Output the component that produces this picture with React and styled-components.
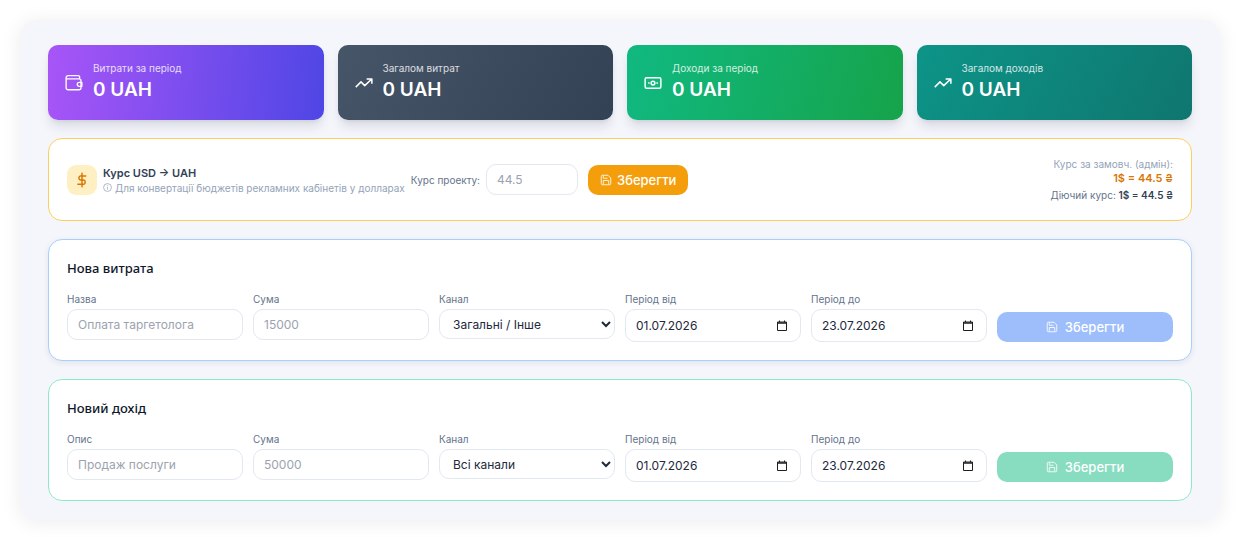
import React, { useState } from 'react'
import styled, { createGlobalStyle } from 'styled-components'

const GlobalStyle = createGlobalStyle`
  * { box-sizing: border-box; }
  body {
    margin: 0;
    background: #fff;
    color: #1e293b;
    font-family: Inter, "Liberation Sans", sans-serif;
  }
  button, input, select { font-family: inherit; }
`

const Page = styled.main`
  margin: 20px;
  padding: 25px 28px 19px;
  display: flex;
  flex-direction: column;
  gap: 18px;
  border-radius: 16px;
  background: #f5f6fc;
  box-shadow: 0 2px 20px rgba(0, 0, 0, 0.08);
`

const Stats = styled.section`
  display: grid;
  grid-template-columns: repeat(4, 1fr);
  gap: 14px;
`

const StatCard = styled.div`
  display: flex;
  align-items: center;
  gap: 10px;
  padding: 16px 17px;
  border-radius: 10px;
  color: #fff;
  background: linear-gradient(${props => props.$angle || '120deg'}, ${props => props.$from}, ${props => props.$to});
  box-shadow: 0 8px 12px -2px rgba(15, 23, 42, 0.12), 0 3px 5px -3px rgba(15, 23, 42, 0.12);
`

const StatLabel = styled.div`
  font-size: 10px;
  line-height: 15px;
  opacity: 0.8;
`

const StatValue = styled.div`
  font-size: 19px;
  line-height: 28px;
  font-weight: 600;
`

const Icon = styled.svg.attrs(props => ({
  viewBox: '0 0 24 24',
  width: props.$size,
  height: props.$size,
  fill: 'none',
  stroke: 'currentColor',
  'aria-hidden': true
}))`
  flex: none;
  display: block;
  stroke-width: ${props => props.$stroke || 2};
  stroke-linejoin: round;
`

const Card = styled.section`
  padding: 18px;
  border: 1px solid ${props => props.$border};
  border-radius: 14px;
  background: #fff;
  box-shadow: ${props => props.$shadow || 'none'};
`

const RateCard = styled(Card)`
  display: flex;
  align-items: center;
  gap: 6px;
`

const RateInfo = styled.div`
  display: flex;
  align-items: center;
  gap: 6px;
`

const RateBadge = styled.div`
  display: grid;
  place-items: center;
  width: 30px;
  height: 30px;
  border-radius: 9px;
  color: #d97706;
  background: #fef0c3;
`

const RateTitle = styled.h2`
  margin: 0;
  font-size: 11px;
  line-height: 16px;
  font-weight: 600;
  color: #334155;
`

const RateHint = styled.p`
  display: flex;
  align-items: center;
  gap: 3px;
  margin: 0;
  font-size: 10px;
  line-height: 14px;
  color: #94a3b8;
`

const RateForm = styled.form`
  display: flex;
  align-items: center;
  gap: 10px;
`

const RateField = styled.div`
  display: flex;
  align-items: center;
  gap: 6px;
`

const RateSummary = styled.div`
  margin-left: auto;
  text-align: right;
  font-size: 10px;
  line-height: 14px;
  color: #94a3b8;
`

const RateDefault = styled.div`
  font-size: 11px;
  line-height: 14px;
  font-weight: 600;
  color: #d97706;
`

const RateActive = styled.div`
  padding-top: 3px;
  color: #64748b;
  strong {
    font-weight: 600;
    color: #334155;
  }
`

const Title = styled.h2`
  margin: 0 0 14px;
  font-family: "Noto Sans", sans-serif;
  font-size: 13px;
  line-height: 20px;
  font-weight: 500;
  color: #0f172a;
`

const Fields = styled.form`
  display: grid;
  grid-template-columns: repeat(6, 1fr);
  gap: 10px;
`

const Field = styled.div`
  display: flex;
  flex-direction: column;
  gap: 3px;
  min-width: 0;
`

const Label = styled.label`
  font-size: 10px;
  line-height: 14px;
  color: #64748b;
`

const Input = styled.input`
  width: ${props => props.$width || '100%'};
  height: 31px;
  padding: 0 10px;
  border: 1px solid #e2e8f0;
  border-radius: 10px;
  outline: none;
  background: #fff;
  color: #1e293b;
  font-size: 12px;
  &::placeholder { color: #9ca3af; }
`

const Select = styled.select`
  width: 100%;
  height: 30px;
  padding: 0 0 0 9px;
  border: 1px solid #e2e8f0;
  border-radius: 10px;
  background: #fff;
  color: #1e293b;
  font-size: 12px;
`

const DateBox = styled.div`
  display: flex;
  align-items: center;
  height: 33px;
  padding: 0 12px 0 10px;
  border: 1px solid #e2e8f0;
  border-radius: 10px;
  background: #fff;
  input {
    flex: 1;
    min-width: 0;
    padding: 0;
    border: 0;
    outline: none;
    background: none;
    color: #1e293b;
    font-size: 12px;
  }
  button {
    padding: 0;
    border: 0;
    background: none;
    color: #1e1e1e;
  }
`

const SaveButton = styled.button`
  display: flex;
  align-items: center;
  justify-content: center;
  align-self: end;
  gap: ${props => props.$gap || '7px'};
  height: 30px;
  padding: 0 12px;
  border: 0;
  border-radius: 10px;
  background: ${props => props.$color};
  color: #fff;
  font-size: 13px;
  font-weight: 500;
  svg { opacity: 0.85; }
`

const WalletIcon = () => (
  <Icon $size={18} $stroke={1.8}>
    <path d='M19.500 6.500V4.200a2 2 0 0 0-2-2H4.200A2.700 2.700 0 0 0 1.500 5v13.300A2.700 2.700 0 0 0 4.200 21h14.600a2.500 2.500 0 0 0 2.500-2.500V9a2.500 2.500 0 0 0-2.500-2.500H1.800' />
    <path d='M22.500 11.200H19a2.600 2.600 0 0 0 0 5.200h3.500z' />
  </Icon>
)

const TrendIcon = () => (
  <Icon $size={18} $stroke={2}>
    <path d='M1 17.500 8 10.500l5 5L22 7M15.500 6.500H22.500V13' />
  </Icon>
)

const CashIcon = () => (
  <Icon $size={18} $stroke={2}>
    <rect x='1.500' y='5' width='21' height='14' rx='2' />
    <circle cx='12' cy='12' r='2.500' />
    <path d='M5.500 12h2M16.500 12h2' />
  </Icon>
)

const DollarIcon = () => (
  <Icon $size={18} $stroke={2} strokeLinecap='round'>
    <path d='M12 3v18M17 6.500H9.800a3 3 0 0 0 0 5.600h4.400a3 3 0 0 1 0 5.700H6.500' />
  </Icon>
)

const InfoIcon = () => (
  <Icon $size={9} $stroke={2}>
    <circle cx='12' cy='12' r='10.500' />
    <path d='M12 10.500v7M12 6v2.500' />
  </Icon>
)

const SaveIcon = () => (
  <Icon $size={12} $stroke={2}>
    <path d='M16 2.500H4.500a2 2 0 0 0-2 2v15a2 2 0 0 0 2 2h15a2 2 0 0 0 2-2V8z' />
    <path d='M6.500 3v5.500H15M6.500 21v-8h11v8' />
  </Icon>
)

const CalendarIcon = () => (
  <Icon $size={12} $stroke={2}>
    <path d='M3 4h18v17H3zM7 1v3M17 1v3' />
    <path d='M3 6h18' strokeWidth='3' />
  </Icon>
)

const stats = [
  { label: 'Витрати за період', from: '#a855f7', to: '#4f46e5', angle: '95deg', icon: <WalletIcon /> },
  { label: 'Загалом витрат', from: '#475569', to: '#334155', icon: <TrendIcon /> },
  { label: 'Доходи за період', from: '#10b981', to: '#16a34a', angle: '105deg', icon: <CashIcon /> },
  { label: 'Загалом доходів', from: '#0d9488', to: '#0f766e', icon: <TrendIcon /> }
]

function DateField ({ id, label, initial }) {
  const [value, setValue] = useState(initial)
  return (
    <Field>
      <Label htmlFor={id}>{label}</Label>
      <DateBox>
        <input id={id} type='text' value={value} onChange={e => setValue(e.target.value)} />
        <button type='button' aria-label={label}><CalendarIcon /></button>
      </DateBox>
    </Field>
  )
}

function EntryForm ({ id, title, nameLabel, namePlaceholder, amount, channel, border, shadow, color }) {
  return (
    <Card $border={border} $shadow={shadow}>
      <Title>{title}</Title>
      <Fields onSubmit={e => e.preventDefault()}>
        <Field>
          <Label htmlFor={`${id}-name`}>{nameLabel}</Label>
          <Input id={`${id}-name`} placeholder={namePlaceholder} />
        </Field>
        <Field>
          <Label htmlFor={`${id}-amount`}>Сума</Label>
          <Input id={`${id}-amount`} placeholder={amount} />
        </Field>
        <Field>
          <Label htmlFor={`${id}-channel`}>Канал</Label>
          <Select id={`${id}-channel`}>
            <option>{channel}</option>
          </Select>
        </Field>
        <DateField id={`${id}-from`} label='Період від' initial='01.07.2026' />
        <DateField id={`${id}-to`} label='Період до' initial='23.07.2026' />
        <SaveButton $color={color}><SaveIcon />Зберегти</SaveButton>
      </Fields>
    </Card>
  )
}

export default function App () {
  return (
    <>
      <GlobalStyle />
      <Page>
        <Stats>
          {stats.map(s => (
            <StatCard key={s.label} $from={s.from} $to={s.to} $angle={s.angle}>
              {s.icon}
              <div>
                <StatLabel>{s.label}</StatLabel>
                <StatValue>0 UAH</StatValue>
              </div>
            </StatCard>
          ))}
        </Stats>

        <RateCard $border='#fbcf5a'>
          <RateInfo>
            <RateBadge><DollarIcon /></RateBadge>
            <div>
              <RateTitle>Курс USD → UAH</RateTitle>
              <RateHint><InfoIcon />Для конвертації бюджетів рекламних кабінетів у долларах</RateHint>
            </div>
          </RateInfo>
          <RateForm onSubmit={e => e.preventDefault()}>
            <RateField>
              <Label htmlFor='rate'>Курс проекту:</Label>
              <Input id='rate' $width='92px' placeholder='44.5' />
            </RateField>
            <SaveButton $color='#f59e0b' $gap='5px'><SaveIcon />Зберегти</SaveButton>
          </RateForm>
          <RateSummary>
            <div>Курс за замовч. (адмін):</div>
            <RateDefault>1$ = 44.5 ₴</RateDefault>
            <RateActive>Діючий курс: <strong>1$ = 44.5 ₴</strong></RateActive>
          </RateSummary>
        </RateCard>

        <EntryForm
          id='expense'
          title='Нова витрата'
          nameLabel='Назва'
          namePlaceholder='Оплата таргетолога'
          amount='15000'
          channel='Загальні / Інше'
          border='#a9cffc'
          shadow='0 2px 6px rgba(15, 23, 42, 0.08)'
          color='#9dbefa'
        />
        <EntryForm
          id='income'
          title='Новий дохід'
          nameLabel='Опис'
          namePlaceholder='Продаж послуги'
          amount='50000'
          channel='Всі канали'
          border='#8ee9c6'
          color='#88dcc0'
        />
      </Page>
    </>
  )
}
